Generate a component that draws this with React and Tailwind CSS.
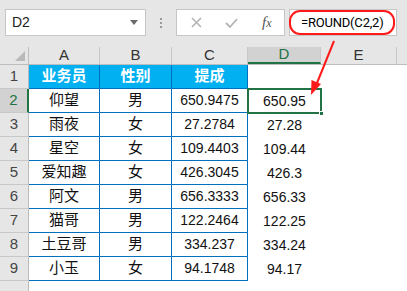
import React from "react";

const rows = [
  ["仰望", "男", "650.9475", "650.95"],
  ["雨夜", "女", "27.2784", "27.28"],
  ["星空", "女", "109.4403", "109.44"],
  ["爱知趣", "女", "426.3045", "426.3"],
  ["阿文", "男", "656.3333", "656.33"],
  ["猫哥", "男", "122.2464", "122.25"],
  ["土豆哥", "男", "334.237", "334.24"],
  ["小玉", "女", "94.1748", "94.17"],
];

const font = "font-['Liberation_Sans','Noto_Sans_CJK_SC',sans-serif]";

function RowHead({ n, active }) {
  return (
    <div
      className={`w-[29px] shrink-0 h-full flex items-center justify-center text-[15px] border-b border-[#c8c8c8] ${
        active
          ? "bg-[#d2d2d2] text-[#217346] border-r-2 border-r-[#217346]"
          : "bg-[#e6e6e6] text-[#444] border-r border-r-[#bdbdbd]"
      }`}
    >
      {n}
    </div>
  );
}

function Cell({ w, children, className = "" }) {
  return (
    <div className={`${w} shrink-0 h-full flex items-center justify-center ${className}`}>
      {children}
    </div>
  );
}

export default function App() {
  return (
    <div className={`relative w-[407px] h-[291px] overflow-hidden bg-white ${font}`}>
      {/* formula bar */}
      <div className="h-[47px] bg-[#e6e6e6] flex items-start pt-[9px]">
        <div className="ml-[5px] w-[141px] h-[27px] bg-white border border-[#c6c6c6] flex items-center justify-between pl-[6px] pr-[7px] text-[14px] text-[#222]">
          <span>D2</span>
          <svg width="8" height="5" viewBox="0 0 8 5">
            <path d="M0 0h8L4 5z" fill="#6b6b6b" />
          </svg>
        </div>
        <div className="w-[30px] h-[27px] flex flex-col items-center justify-center gap-[2px]">
          <span className="w-[2px] h-[2px] bg-[#9a9a9a]" />
          <span className="w-[2px] h-[2px] bg-[#9a9a9a]" />
          <span className="w-[2px] h-[2px] bg-[#9a9a9a]" />
        </div>
        <div className="w-[109px] h-[27px] bg-white border border-[#c6c6c6] flex items-center">
          <svg className="ml-[14px]" width="11" height="11" viewBox="0 0 11 11">
            <path d="M1 1l9 9M10 1l-9 9" stroke="#b4b4b4" strokeWidth="1.6" />
          </svg>
          <svg className="ml-[23px]" width="13" height="10" viewBox="0 0 13 10">
            <path d="M1 5l4 4 7-8" stroke="#b4b4b4" strokeWidth="1.8" fill="none" />
          </svg>
          <span className="ml-[24px] text-[15px] italic text-[#555] font-['Liberation_Serif',serif]">
            f<span className="text-[12px]">x</span>
          </span>
        </div>
        <div className="relative ml-[4px] mr-[10px] flex-1 h-[27px] bg-white border border-[#c6c6c6] flex items-center pl-[11px] text-[13px] tracking-[-0.2px] text-black font-['Roboto',sans-serif]">
          =ROUND(C2,2)
          <div className="absolute left-[-1px] top-0 w-[106px] h-[25px] rounded-[11px] border-2 border-[#ff1a1a]" />
        </div>
      </div>

      {/* column headers */}
      <div className="flex h-[18px] bg-[#e6e6e6] text-[15px] text-[#333] border-b border-[#bdbdbd]">
        <div className="w-[29px] shrink-0 relative border-r border-[#bdbdbd]">
          <svg className="absolute left-[15px] top-[4px]" width="11" height="11" viewBox="0 0 11 11">
            <path d="M0 10h10V0z" fill="#b9b9b9" />
          </svg>
        </div>
        <Cell w="w-[71px]" className="border-r border-[#c8c8c8]">A</Cell>
        <Cell w="w-[72px]" className="border-r border-[#c8c8c8]">B</Cell>
        <Cell w="w-[76px]" className="border-r border-[#c8c8c8]">C</Cell>
        <Cell w="w-[73px]" className="bg-[#d2d2d2] text-[#217346] border-r border-[#c8c8c8] border-b-2 border-b-[#217346] h-[18px]">D</Cell>
        <Cell w="w-[76px]" className="border-r border-[#c8c8c8]">E</Cell>
        <div className="flex-1" />
      </div>

      {/* row 1 header */}
      <div className="flex h-[24px]">
        <RowHead n={1} />
        <Cell w="w-[71px]" className="bg-[#00b0f0] text-white font-bold text-[15px] border-r border-b border-[#0070c0]">业务员</Cell>
        <Cell w="w-[72px]" className="bg-[#00b0f0] text-white font-bold text-[15px] border-r border-b border-[#0070c0]">性别</Cell>
        <Cell w="w-[76px]" className="bg-[#00b0f0] text-white font-bold text-[15px] border-r border-b border-[#0070c0]">提成</Cell>
        <div className="flex-1" />
      </div>

      {rows.map((r, i) => (
        <div key={i} className="flex h-[24px] text-[#111]">
          <RowHead n={i + 2} active={i === 0} />
          <Cell w="w-[71px]" className="text-[15px] border-r border-b border-[#0070c0]">{r[0]}</Cell>
          <Cell w="w-[72px]" className="text-[15px] border-r border-b border-[#0070c0]">{r[1]}</Cell>
          <Cell w="w-[76px]" className="text-[14px] border-r border-b border-[#0070c0]">{r[2]}</Cell>
          <Cell w="w-[73px]" className="relative text-[14px]">
            {r[3]}
            {i === 0 && (
              <>
                <div className="absolute -left-[1px] -top-[1px] -right-[1px] -bottom-[1px] border-2 border-[#217346]" />
                <div className="absolute -right-[3px] -bottom-[3px] w-[5px] h-[5px] bg-[#217346] border border-white" />
              </>
            )}
          </Cell>
          <div className="flex-1" />
        </div>
      ))}

      <div className="flex h-[24px]">
        <RowHead n="" />
      </div>

      {/* red arrow annotation */}
      <svg className="absolute left-0 top-0 pointer-events-none" width="407" height="291">
        <line x1="334" y1="41" x2="317" y2="83" stroke="#ff1a1a" strokeWidth="2" />
        <path d="M311 95 L311.5 80 L321 84 Z" fill="#ff1a1a" />
      </svg>
    </div>
  );
}
